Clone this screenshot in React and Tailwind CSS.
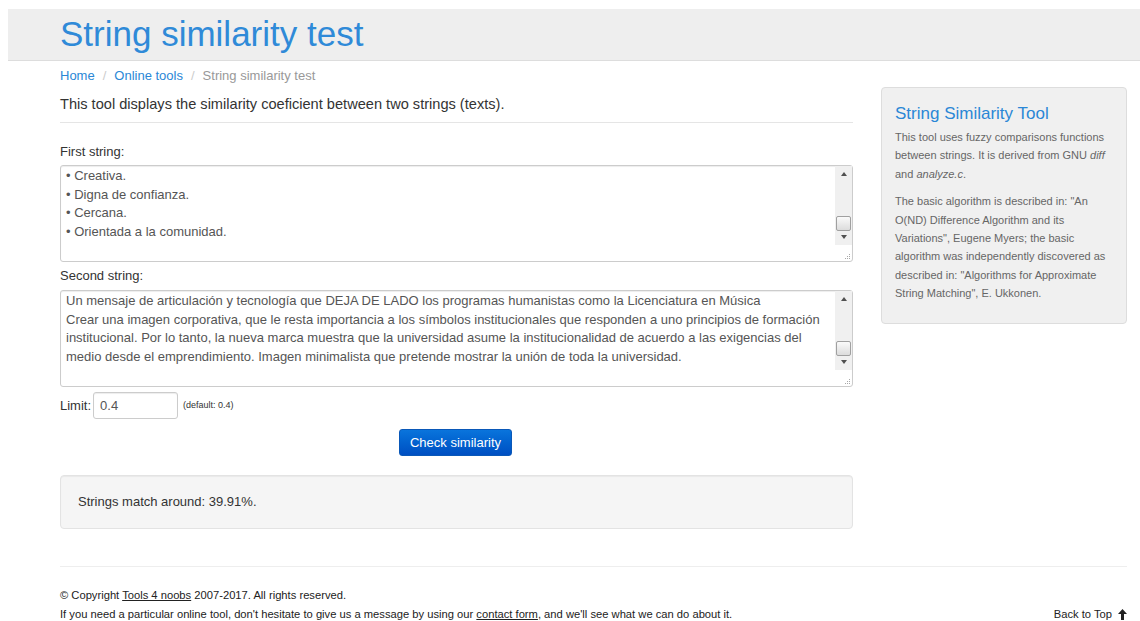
import React from "react";

const FONT = { fontFamily: '"Liberation Sans", Arial, Helvetica, sans-serif' };

// old-style textarea look: static text box with a fake classic scrollbar
function TextBox({ lines, thumbTop }) {
  return (
    <div className="relative h-[97px] rounded-[3px] border border-[#cccccc] bg-white shadow-[inset_0_1px_1px_rgba(0,0,0,0.075)]">
      <div className="pl-[5px] pr-[24px] pt-[1px] text-[13px] leading-[18.5px] text-[#555555]">
        {lines.map((l, i) => (
          <div key={i} className="whitespace-nowrap">
            {l}
          </div>
        ))}
      </div>
      <div className="absolute right-0 top-0 bottom-[16px] w-[17px] bg-[#f0f0f0]">
        <div className="flex h-[16px] items-center justify-center">
          <div className="h-0 w-0 border-x-[3px] border-b-[4px] border-x-transparent border-b-[#505050]" />
        </div>
        <div
          className="absolute left-[1px] h-[15px] w-[15px] rounded-[2px] border border-[#a0a0a0] bg-gradient-to-b from-[#fafafa] to-[#dcdcdc]"
          style={{ top: thumbTop }}
        />
        <div className="absolute bottom-0 flex h-[16px] w-full items-center justify-center">
          <div className="h-0 w-0 border-x-[3px] border-t-[4px] border-x-transparent border-t-[#505050]" />
        </div>
      </div>
      <div className="absolute bottom-[2px] right-[2px] grid grid-cols-3 gap-[1px]">
        {[0, 0, 1, 0, 1, 1, 1, 1, 1].map((on, i) => (
          <div key={i} className={`h-[1px] w-[1px] ${on ? "bg-[#a8a8a8]" : ""}`} />
        ))}
      </div>
    </div>
  );
}

export default function App() {
  const first = [
    "• Creativa.",
    "• Digna de confianza.",
    "• Cercana.",
    "• Orientada a la comunidad.",
  ];
  const second = [
    "Un mensaje de articulación y tecnología que DEJA DE LADO los programas humanistas como la Licenciatura en Música",
    "Crear una imagen corporativa, que le resta importancia a los símbolos institucionales que responden a uno principios de formación",
    "institucional. Por lo tanto, la nueva marca muestra que la universidad asume la institucionalidad de acuerdo a las exigencias del",
    "medio desde el emprendimiento. Imagen minimalista que pretende mostrar la unión de toda la universidad.",
  ];

  return (
    <div className="min-h-[621px] bg-white pt-[9px] text-[#333333]" style={FONT}>
      {/* page header band */}
      <div className="ml-[8px] h-[52px] border-b border-[#dddddd] bg-[#eeeeee] pl-[52px]">
        <h1 className="pt-[3px] text-[35px] leading-[44px] text-[#2f8ad8]">String similarity test</h1>
      </div>

      <div className="ml-[60px] w-[1067px]">
        <div className="flex gap-[28px]">
          {/* main column */}
          <div className="w-[793px]">
            <div className="flex items-center pt-[6px] text-[13px] leading-[18px]">
              <span className="text-[#2a87d6]">Home</span>
              <span className="px-[8px] text-[#cccccc]">/</span>
              <span className="text-[#2a87d6]">Online tools</span>
              <span className="px-[8px] text-[#cccccc]">/</span>
              <span className="text-[#999999]">String similarity test</span>
            </div>
            <p className="mt-[9px] text-[14.6px] leading-[20px]">
              This tool displays the similarity coeficient between two strings (texts).
            </p>
            <div className="mt-[8px] border-t border-[#e5e5e5]" />

            <div className="mt-[20px] text-[13px] leading-[17px]">First string:</div>
            <div className="mt-[5px]">
              <TextBox lines={first} thumbTop={50} />
            </div>

            <div className="mt-[5px] text-[13px] leading-[17px]">Second string:</div>
            <div className="mt-[6px]">
              <TextBox lines={second} thumbTop={50} />
            </div>

            <div className="mt-[5px] flex items-center text-[13px]">
              <span>Limit:</span>
              <div className="ml-[2px] flex h-[27px] w-[85px] items-center rounded-[3px] border border-[#cccccc] pl-[6px] text-[13px] text-[#555555] shadow-[inset_0_1px_1px_rgba(0,0,0,0.075)]">
                0.4
              </div>
              <span className="ml-[5px] text-[9px] text-[#333333]">(default: 0.4)</span>
            </div>

            <div className="mt-[10px] flex justify-center pr-[2px]">
              <button className="h-[27px] w-[113px] rounded-[3px] border border-[#0a58b8] bg-gradient-to-b from-[#0a74dc] to-[#004fc2] text-[13px] text-white">
                Check similarity
              </button>
            </div>

            <div className="mt-[19px] flex h-[54px] items-center rounded-[4px] border border-[#e3e3e3] bg-[#f5f5f5] pl-[17px] text-[13px] shadow-[inset_0_1px_1px_rgba(0,0,0,0.05)]">
              Strings match around: 39.91%.
            </div>
          </div>

          {/* sidebar */}
          <div className="w-[246px] pt-[26px]">
            <div className="h-[237px] rounded-[4px] border border-[#dddddd] bg-[#f0f0f0] px-[13px] pt-[15px]">
              <h3 className="text-[17px] leading-[22px] text-[#2a87d6]">String Similarity Tool</h3>
              <p className="mt-[3px] text-[11px] leading-[18.4px] text-[#666666]">
                This tool uses fuzzy comparisons functions between strings. It is derived from GNU <i>diff</i> and{" "}
                <i>analyze.c</i>.
              </p>
              <p className="mt-[9px] text-[11px] leading-[18.4px] text-[#666666]">
                The basic algorithm is described in: "An O(ND) Difference Algorithm and its Variations", Eugene Myers;
                the basic algorithm was independently discovered as described in: "Algorithms for Approximate String
                Matching", E. Ukkonen.
              </p>
            </div>
          </div>
        </div>

        {/* footer */}
        <div className="mt-[37px] border-t border-[#eeeeee]" />
        <div className="mt-[19px] text-[11.2px] leading-[19px] text-[#222222]">
          <div>
            © Copyright <span className="underline">Tools 4 noobs</span> 2007-2017. All rights reserved.
          </div>
          <div className="flex justify-between">
            <span>
              If you need a particular online tool, don't hesitate to give us a message by using our{" "}
              <span className="underline">contact form</span>, and we'll see what we can do about it.
            </span>
            <span className="flex items-center gap-[6px]">
              Back to Top
              <svg width="9" height="11" viewBox="0 0 9 11">
                <path d="M4.5 0 L9 5 H6 V11 H3 V5 H0 Z" fill="#222222" />
              </svg>
            </span>
          </div>
        </div>
      </div>
    </div>
  );
}
